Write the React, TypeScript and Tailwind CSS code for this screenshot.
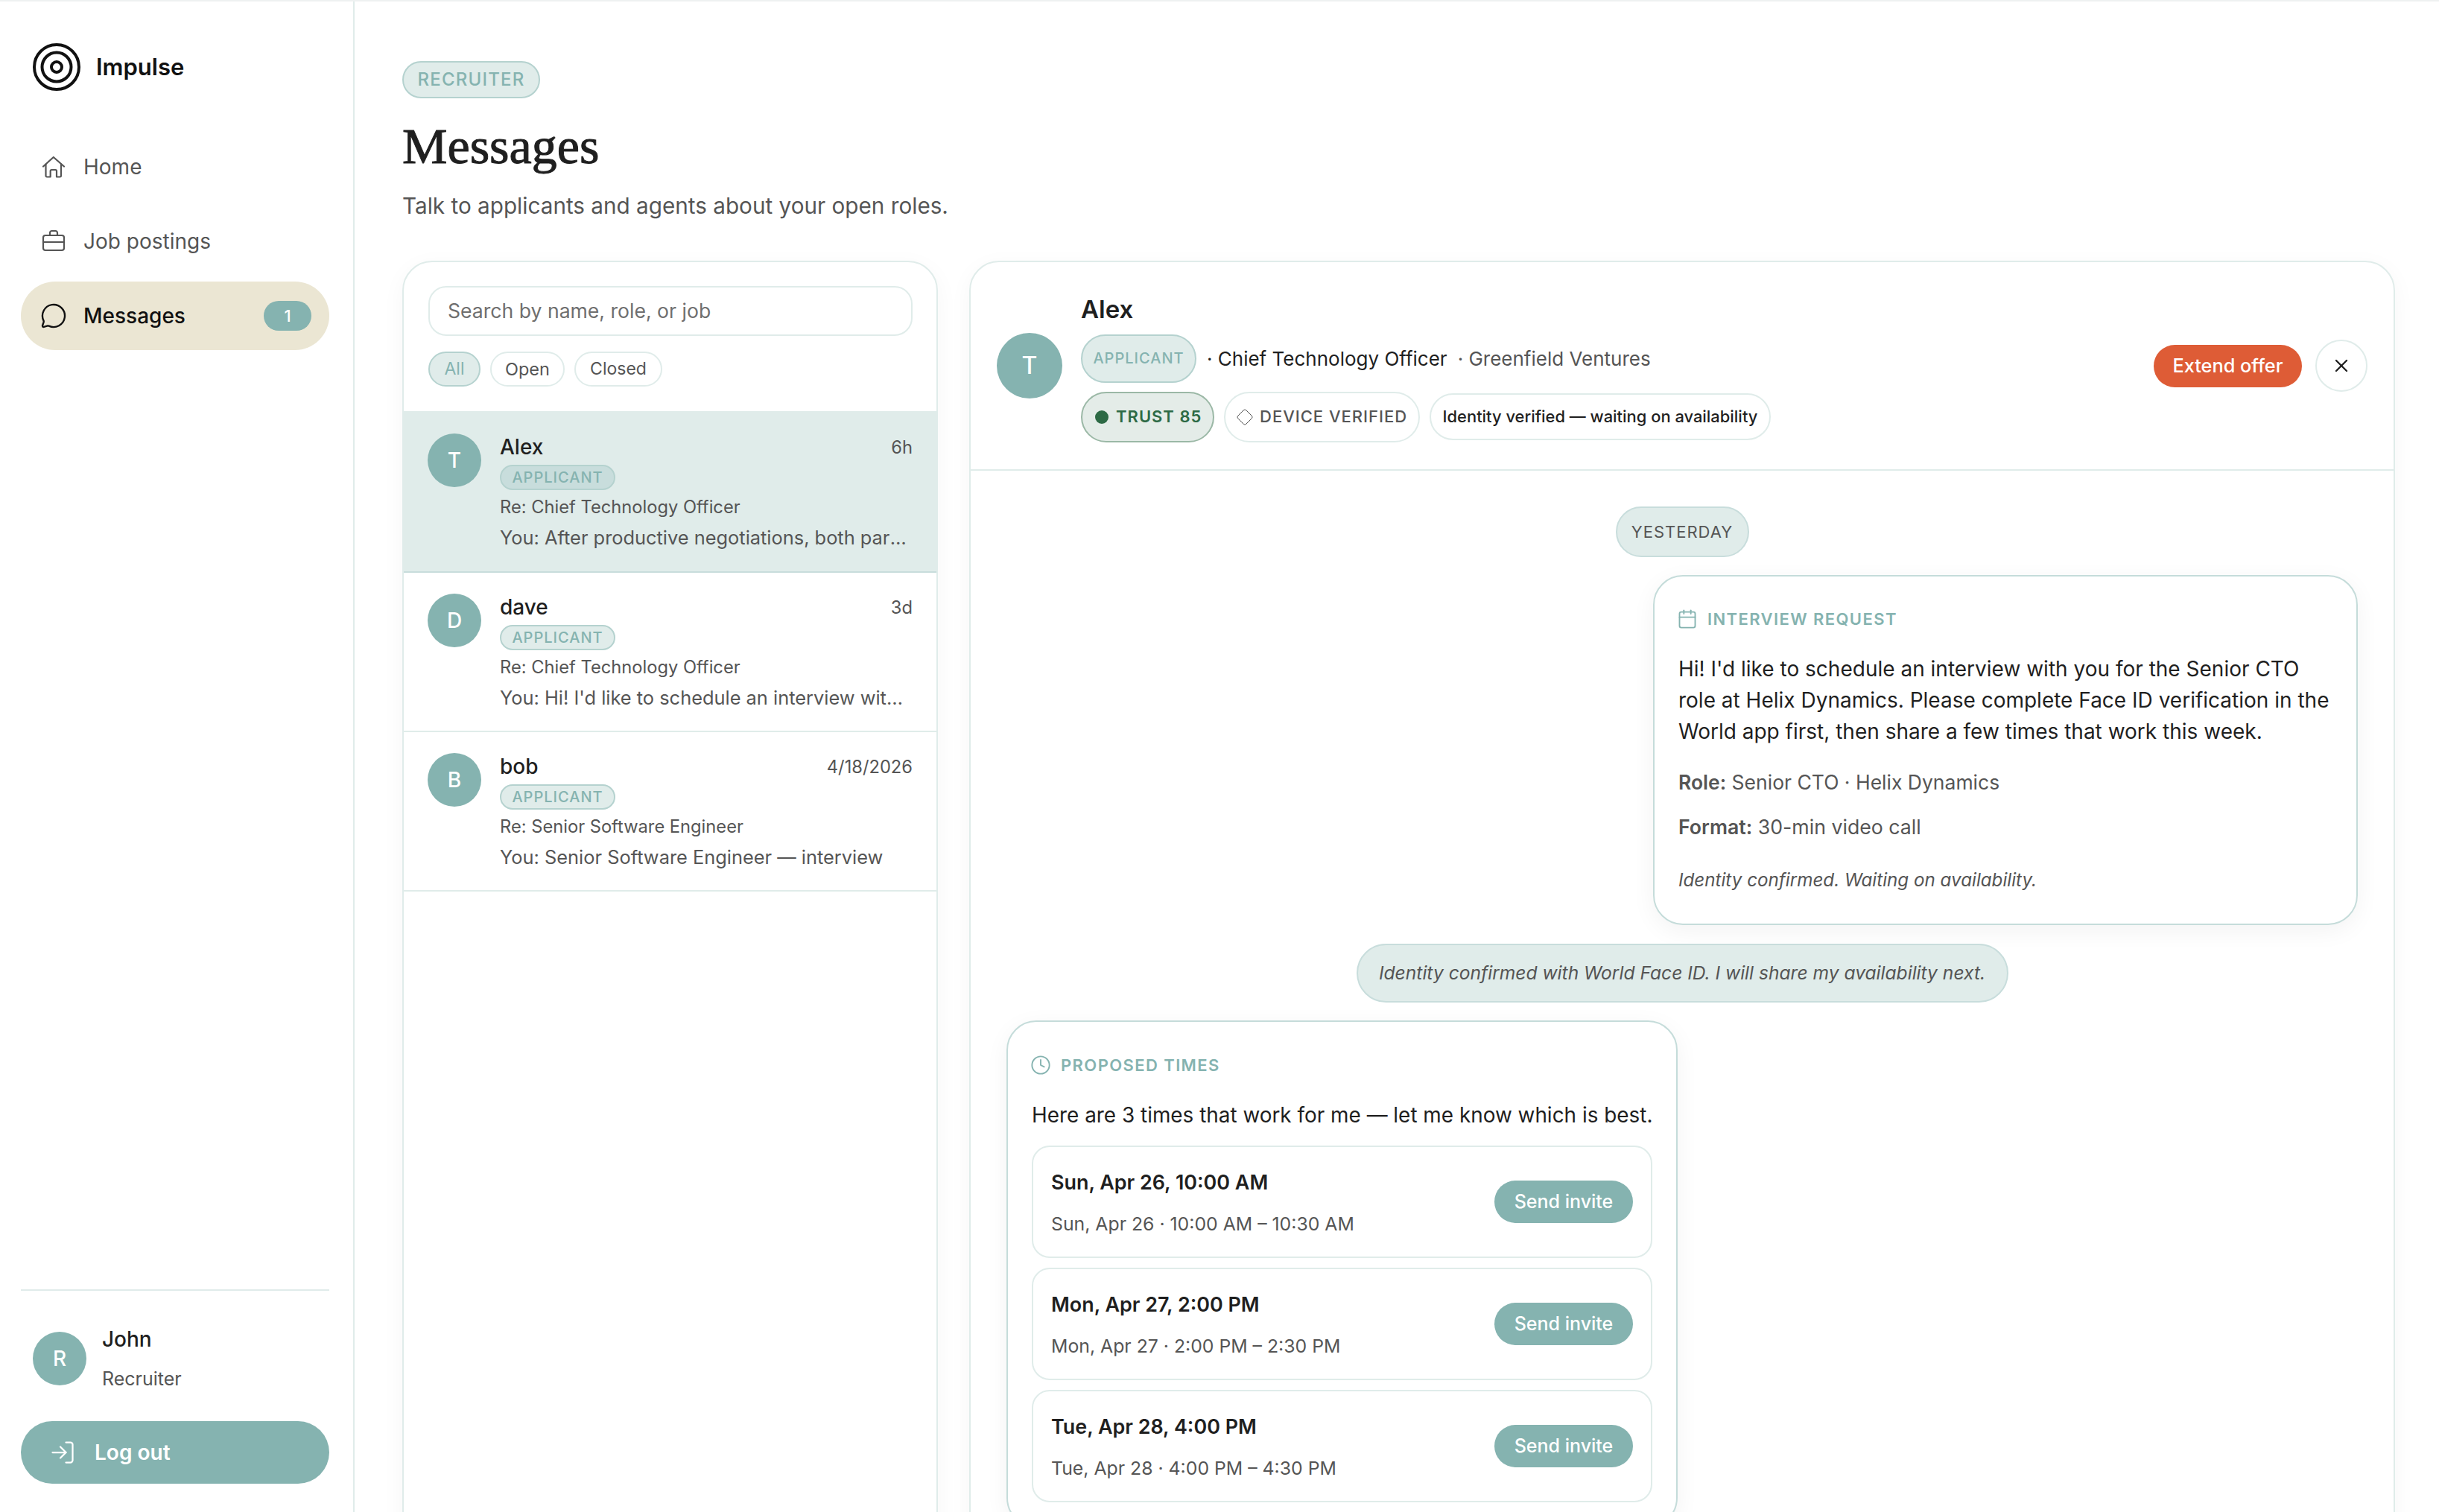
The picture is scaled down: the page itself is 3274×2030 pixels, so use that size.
import React from "react";
import { MessageCircle, Calendar, Clock, X, LogIn, Diamond } from "lucide-react";

const Badge = ({ selected }: { selected?: boolean }) => (
  <span className={`inline-flex items-center justify-center h-[34px] w-[155px] rounded-full border-2 border-[#b5d2cf] text-[20px] leading-none font-medium tracking-[1px] text-[#85b3b0] ${selected ? "bg-[#c8dddc]" : "bg-[#e0ecea]"}`}>
    APPLICANT
  </span>
);

const Row = ({ letter, name, time, re, last, selected }: { letter: string; name: string; time: string; re: string; last: string; selected?: boolean }) => (
  <div className={`flex gap-[25px] px-[32px] border-b-2 ${selected ? "h-[217px] pt-[30px] bg-[#e0ecea] border-[#c8dddc]" : "h-[214px] pt-[28px] border-[#e0ecea]"}`}>
    <div className="w-[72px] h-[72px] rounded-full bg-[#85b3b0] text-white flex items-center justify-center text-[28px] font-medium shrink-0">{letter}</div>
    <div className="flex-1 min-w-0">
      <div className="flex items-center justify-between h-[36px]">
        <span className="text-[28px] font-medium text-[#1f1f1f]">{name}</span>
        <span className="mt-[2px] text-[23.7px] text-[#555555]">{time}</span>
      </div>
      <div className="mt-[6px] h-[34px] flex"><Badge selected={selected} /></div>
      <div className="mt-[5px] text-[23.7px] leading-[36px] text-[#555555] truncate">{re}</div>
      <div className="mt-[4px] text-[25.4px] leading-[38px] text-[#555555] truncate">{last}</div>
    </div>
  </div>
);

const Slot = ({ a, b }: { a: string; b: string }) => (
  <div className="h-[151px] rounded-[24px] border-2 border-[#e0ecea] flex items-center justify-between pl-[24px] pr-[24px]">
    <div>
      <div className="text-[26.9px] leading-[40px] font-semibold text-[#1f1f1f]">{a}</div>
      <div className="mt-[18px] text-[24.8px] leading-[36px] text-[#555555]">{b}</div>
    </div>
    <button className="h-[57px] w-[186px] rounded-full bg-[#85b3b0] text-white text-[25px] font-medium">Send invite</button>
  </div>
);

const HomeIcon = () => (
  <svg width="32" height="32" viewBox="0 0 32 32" fill="none" stroke="#555555" strokeWidth="2.2" strokeLinecap="round" strokeLinejoin="round" className="shrink-0">
    <path d="M2 15.5 15.8 3 30 15.5" />
    <path d="M5.5 12.5V28a1.5 1.5 0 0 0 1.5 1.5h4.7V21.5a1.5 1.5 0 0 1 1.5-1.5h5.3a1.5 1.5 0 0 1 1.5 1.5v8h4.5a1.5 1.5 0 0 0 1.5-1.5V12.5" />
  </svg>
);

const BagIcon = () => (
  <svg width="32" height="32" viewBox="0 0 32 32" fill="none" stroke="#555555" strokeWidth="2.2" strokeLinecap="round" strokeLinejoin="round" className="shrink-0">
    <rect x="2" y="8" width="28" height="20" rx="3" />
    <path d="M11 8V4.5A2.5 2.5 0 0 1 13.5 2h5A2.5 2.5 0 0 1 21 4.5V8" />
    <path d="M2 17h28" />
  </svg>
);

export default function App() {
  return (
    <div className="h-[2030px] w-[3274px] overflow-hidden bg-white border-t-2 border-[#eef1f1] flex font-['Inter',sans-serif] text-[#1f1f1f]">
      <aside className="w-[476px] shrink-0 h-full border-r-2 border-[#e0ecea] pl-[28px] pr-[32px] pb-[38px] flex flex-col">
        <div className="flex items-center gap-[21px] pl-[16px] pt-[56px] h-[176px] pb-[56px]">
          <svg width="64" height="64" viewBox="0 0 64 64" fill="none" stroke="#111111" strokeWidth="4">
            <circle cx="32" cy="32" r="30" />
            <circle cx="32" cy="32" r="19.5" />
            <circle cx="32" cy="32" r="7" />
          </svg>
          <span className="text-[31px] font-semibold text-[#111111]">Impulse</span>
        </div>
        <nav className="flex flex-col gap-[8px]">
          <div className="h-[92px] flex items-center gap-[24px] px-[28px] text-[28px] text-[#555555]"><HomeIcon />Home</div>
          <div className="h-[92px] flex items-center gap-[24px] px-[28px] text-[28px] text-[#555555]"><BagIcon />Job postings</div>
          <div className="h-[92px] flex items-center gap-[24px] pl-[28px] pr-[24px] text-[28px] font-medium text-[#111111] bg-[#ebe6d3] rounded-full">
            <MessageCircle size={36} strokeWidth={1.6} className="-mx-[2px] shrink-0" />
            <span className="flex-1">Messages</span>
            <span className="w-[64px] h-[40px] rounded-full bg-[#85b3b0] text-white text-[22px] font-medium flex items-center justify-center">1</span>
          </div>
        </nav>
        <div className="mt-auto border-t-2 border-[#e0ecea] pt-[55px]">
          <div className="flex items-start gap-[21px] pl-[16px]">
            <div className="w-[72px] h-[72px] rounded-full bg-[#85b3b0] text-white flex items-center justify-center text-[28px] font-medium shrink-0">R</div>
            <div>
              <div className="text-[28px] leading-[36px] font-medium -mt-[8px]">John</div>
              <div className="mt-[19px] text-[25px] leading-[32px] text-[#555555]">Recruiter</div>
            </div>
          </div>
          <button className="mt-[41px] w-full h-[84px] rounded-full bg-[#85b3b0] text-white flex items-center gap-[27px] pl-[40px] text-[28px] font-semibold">
            <LogIn size={36} strokeWidth={1.5} className="-mx-[2px]" />Log out
          </button>
        </div>
      </aside>

      <main className="flex-1 min-w-0 pl-[64px] pr-[59px] pt-[80px]">
        <span className="inline-flex items-center justify-center h-[50px] w-[185px] rounded-full bg-[#e0ecea] border-2 border-[#b5d2cf] text-[#85b3b0] text-[24px] font-medium tracking-[1.2px]">RECRUITER</span>
        <h1 className="mt-[22px] font-['Liberation_Serif',serif] text-[68px] leading-[84px] text-[#1f1f1f] [-webkit-text-stroke:1px_#1f1f1f]">Messages</h1>
        <p className="mt-[16px] text-[29.7px] leading-[44px] text-[#555555]">Talk to applicants and agents about your open roles.</p>

        <div className="mt-[52px] flex gap-[42px] items-start">
          <section className="w-[719px] shrink-0 h-[1800px] rounded-[40px] border-2 border-[#e0ecea] bg-white shadow-[0_8px_32px_rgba(0,0,0,0.04)] overflow-hidden">
            <div className="pl-[33px] pr-[32px] pt-[32px]">
              <div className="h-[67px] rounded-[24px] border-2 border-[#e0ecea] flex items-center pl-[24px] text-[26.6px] text-[#6f6f6f]">Search by name, role, or job</div>
              <div className="mt-[21px] flex gap-[13px]">
                <span className="h-[47px] w-[70px] rounded-full border-2 border-[#b5d2cf] bg-[#e0ecea] text-[#85b3b0] text-[23px] flex items-center justify-center">All</span>
                <span className="h-[47px] w-[100px] rounded-full border-2 border-[#e0ecea] text-[#555555] text-[23.5px] flex items-center justify-center">Open</span>
                <span className="h-[47px] w-[118px] rounded-full border-2 border-[#e0ecea] text-[#555555] text-[23px] flex items-center justify-center">Closed</span>
              </div>
            </div>
            <div className="mt-[33px]">
              <Row selected letter="T" name="Alex" time="6h" re="Re: Chief Technology Officer" last="You: After productive negotiations, both parties have agreed" />
              <Row letter="D" name="dave" time="3d" re="Re: Chief Technology Officer" last="You: Hi! I'd like to schedule an interview with you for the" />
              <Row letter="B" name="bob" time="4/18/2026" re="Re: Senior Software Engineer" last="You: Senior Software Engineer — interview" />
            </div>
          </section>

          <section className="flex-1 min-w-0 h-[1800px] rounded-[40px] border-2 border-[#e0ecea] bg-white shadow-[0_8px_32px_rgba(0,0,0,0.04)] overflow-hidden">
            <header className="h-[280px] border-b-2 border-[#e0ecea] flex items-center px-[35px] gap-[25px]">
              <div className="w-[88px] h-[88px] rounded-full bg-[#85b3b0] text-white flex items-center justify-center text-[32px] font-medium shrink-0">T</div>
              <div className="flex-1 min-w-0 mt-[4px]">
                <div className="text-[33px] leading-[44px] font-semibold">Alex</div>
                <div className="mt-[12px] flex items-center h-[65px] text-[26px]">
                  <span className="h-[65px] w-[155px] rounded-full border-2 border-[#b5d2cf] bg-[#e0ecea] text-[#85b3b0] text-[20px] font-medium tracking-[1px] flex items-center justify-center">APPLICANT</span>
                  <span className="ml-[14px]">· Chief Technology Officer</span>
                  <span className="ml-[14px] text-[#555555]">· Greenfield Ventures</span>
                </div>
                <div className="mt-[12px] flex items-center gap-[13px]">
                  <span className="h-[68px] w-[179px] pl-[17px] rounded-full border-2 border-[#9bb8a6] bg-[#e4ece8] text-[#2d6a45] text-[22px] font-semibold tracking-[1px] flex items-center gap-[10px] whitespace-nowrap">
                    <span className="w-[18px] h-[18px] rounded-full bg-[#2d6a45] shrink-0" />TRUST 85
                  </span>
                  <span className="h-[68px] w-[263px] pl-[14px] rounded-full border-2 border-[#e0ecea] text-[#555555] text-[22px] font-medium tracking-[1px] flex items-center gap-[8px] whitespace-nowrap">
                    <Diamond size={24} strokeWidth={1} className="shrink-0" />DEVICE VERIFIED
                  </span>
                  <span className="h-[63px] w-[458px] rounded-full border-2 border-[#e0ecea] text-[#1f1f1f] text-[21.9px] font-medium flex items-center justify-center whitespace-nowrap">Identity verified — waiting on availability</span>
                </div>
              </div>
              <div className="flex items-center gap-[18px] shrink-0">
                <button className="h-[57px] w-[199px] rounded-full bg-[#de5c36] text-white text-[25.3px] font-medium">Extend offer</button>
                <button className="h-[70px] w-[70px] rounded-full border-2 border-[#e0ecea] flex items-center justify-center"><X size={28} strokeWidth={2} /></button>
              </div>
            </header>

            <div className="flex flex-col px-[48px] pt-[48px]">
              <span className="self-center h-[68px] w-[179px] rounded-full bg-[#e0ecea] border-2 border-[#c8dddc] text-[22px] tracking-[1px] text-[#555555] flex items-center justify-center">YESTERDAY</span>
              <div className="self-end mt-[24px] w-[946px] h-[470px] rounded-[40px] border-2 border-[#c5dcda] bg-white shadow-[0_8px_32px_rgba(0,0,0,0.05)] px-[32px] pt-[42px]">
                <div className="flex items-center gap-[15px] text-[#85b3b0] text-[22px] font-semibold tracking-[1.4px] leading-[30px]"><Calendar size={28} strokeWidth={1.6} className="-mx-[2px]" />INTERVIEW REQUEST</div>
                <p className="mt-[31px] text-[28px] leading-[42px]">Hi! I'd like to schedule an interview with you for the Senior CTO role at Helix Dynamics. Please complete Face ID verification in the World app first, then share a few times that work this week.</p>
                <p className="mt-[28px] text-[26.5px] leading-[38px] text-[#555555]"><b className="font-semibold">Role:</b> Senior CTO · Helix Dynamics</p>
                <p className="mt-[22px] text-[26.7px] leading-[38px] text-[#555555]"><b className="font-semibold">Format:</b> 30-min video call</p>
                <p className="mt-[35px] text-[24.2px] leading-[36px] italic text-[#555555]">Identity confirmed. Waiting on availability.</p>
              </div>
              <span className="self-center mt-[25px] h-[79px] w-[875px] rounded-full bg-[#e0ecea] border-2 border-[#c8dddc] text-[24.6px] italic text-[#555555] flex items-center justify-center">Identity confirmed with World Face ID. I will share my availability next.</span>
              <div className="self-start mt-[24px] w-[901px] rounded-[40px] border-2 border-[#c5dcda] bg-white shadow-[0_8px_32px_rgba(0,0,0,0.05)] px-[32px] pt-[43px] pb-[32px]">
                <div className="flex items-center gap-[15px] text-[#85b3b0] text-[22px] font-semibold tracking-[1.4px] leading-[30px]"><Clock size={28} strokeWidth={1.6} className="-mx-[2px]" />PROPOSED TIMES</div>
                <p className="mt-[31px] text-[27.9px] leading-[42px] whitespace-nowrap">Here are 3 times that work for me — let me know which is best.</p>
                <div className="mt-[20px] flex flex-col gap-[13px]">
                  <Slot a="Sun, Apr 26, 10:00 AM" b="Sun, Apr 26 · 10:00 AM – 10:30 AM" />
                  <Slot a="Mon, Apr 27, 2:00 PM" b="Mon, Apr 27 · 2:00 PM – 2:30 PM" />
                  <Slot a="Tue, Apr 28, 4:00 PM" b="Tue, Apr 28 · 4:00 PM – 4:30 PM" />
                </div>
              </div>
            </div>
          </section>
        </div>
      </main>
    </div>
  );
}
